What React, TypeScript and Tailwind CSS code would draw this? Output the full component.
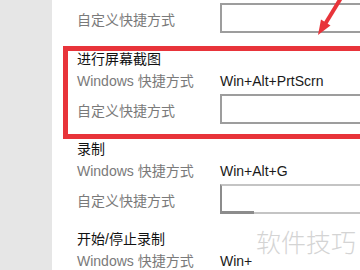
import React from "react";

const font = { fontFamily: '"Liberation Sans", "Noto Sans CJK SC", sans-serif' };

function Box({ variant = "normal" }: { variant?: "normal" | "partial" }) {
  if (variant === "partial") {
    return (
      <div className="relative h-[30px] w-[160px] shrink-0 border-2 border-[#c4c4c4] border-l-[#8c8c8c] bg-white">
        <span className="absolute -bottom-[2px] -left-[2px] h-[3px] w-[34px] bg-[#8c8c8c]" />
      </div>
    );
  }
  return <div className="h-[30px] w-[160px] shrink-0 border-2 border-[#9d9d9d] bg-white" />;
}

function CustomRow({ variant }: { variant?: "normal" | "partial" }) {
  return (
    <div className="flex h-[30px] items-center">
      <span className="w-[143px] shrink-0 pt-[3px] text-[14px] leading-none text-[#7a7a7a]">自定义快捷方式</span>
      <Box variant={variant} />
    </div>
  );
}

function Section({ title, value, variant, last }: { title: string; value: string; variant?: "normal" | "partial"; last?: boolean }) {
  return (
    <div className={last ? "flex flex-col" : "flex flex-col pb-[14px]"}>
      <div className="flex h-[22px] items-center text-[14px] leading-none text-[#111]">{title}</div>
      <div className="flex h-[22px] items-center text-[14px] leading-none">
        <span className="w-[143px] shrink-0 text-[#7a7a7a]">Windows 快捷方式</span>
        <span className="text-[#1a1a1a]">{value}</span>
      </div>
      {!last && (
        <div className="mt-[2px]">
          <CustomRow variant={variant} />
        </div>
      )}
    </div>
  );
}

export default function App() {
  return (
    <div className="relative flex h-[270px] w-[360px] overflow-hidden bg-white" style={font}>
      <div className="w-[52px] shrink-0 bg-[#e6e6e6]" />
      <div className="flex flex-1 flex-col pl-[25px]">
        <div className="mt-[3px] pb-[15px]">
          <CustomRow />
        </div>
        <Section title="进行屏幕截图" value="Win+Alt+PrtScrn" />
        <Section title="录制" value="Win+Alt+G" variant="partial" />
        <Section title="开始/停止录制" value="Win+" last />
      </div>

      <div className="absolute left-[63px] top-[46px] h-[93px] w-[320px] border-[5px] border-[#e8343a]" />

      <div
        className="absolute left-[256px] top-[229px] text-[25px] leading-none text-[#d4d4d4]"
        style={{ fontFamily: '"Noto Sans CJK SC", sans-serif', fontWeight: 300 }}
      >
        软件技巧
      </div>

      <svg className="absolute left-0 top-0" width="360" height="270" viewBox="0 0 360 270">
        <line x1="341" y1="-2" x2="324.5" y2="25" stroke="#e8343a" strokeWidth="4" />
        <polygon points="318,35 330.5,25.5 321,19.5" fill="#e8343a" />
      </svg>
    </div>
  );
}
